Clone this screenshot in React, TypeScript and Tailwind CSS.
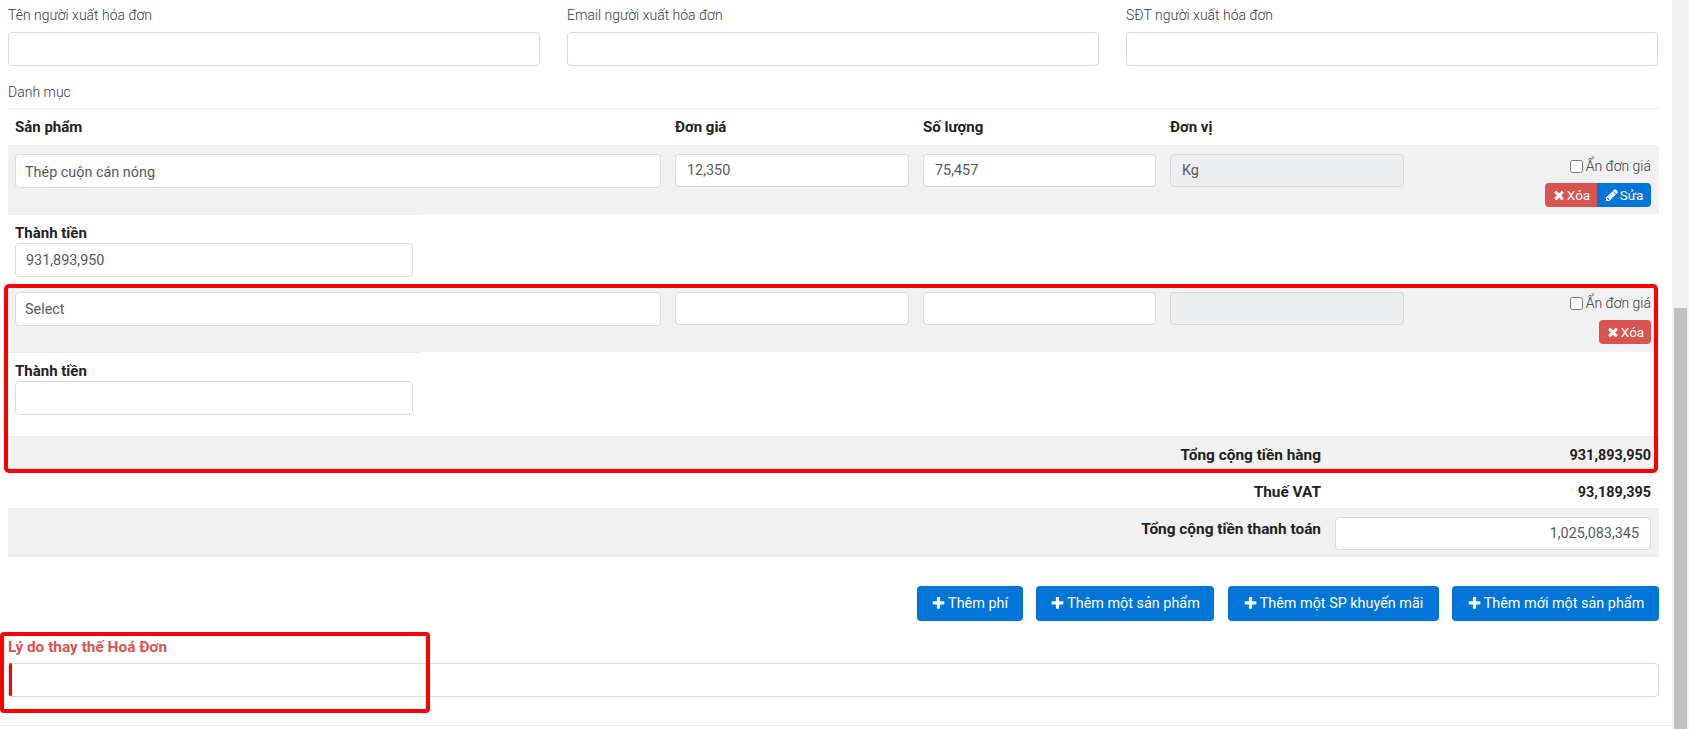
const issuerFields = ['Tên người xuất hóa đơn', 'Email người xuất hóa đơn', 'SĐT người xuất hóa đơn'];
const addButtons = [
  { label: 'Thêm phí', width: 'w-[106px]' },
  { label: 'Thêm một sản phẩm', width: 'w-[178px]' },
  { label: 'Thêm một SP khuyến mãi', width: 'w-[211px]' },
  { label: 'Thêm mới một sản phẩm', width: 'w-[207px]' },
];

const rowGrid = 'grid grid-cols-[646px_234px_233px_234px_1fr] gap-x-[14px] pl-[7px] pr-[8px]';
const inputBase =
  'block w-full rounded-[4px] border border-[#d9d9d9] text-[14.4px] text-[#55595c] outline-none';
const heading = 'text-[15px] font-bold text-[#222222]';
const totalLabel = 'w-[1313px] text-right text-[15.4px] font-bold text-[#222222]';
const totalValue = 'flex-1 pr-[8px] text-right text-[14.4px] font-bold text-[#222222]';

function CloseIcon() {
  return (
    <svg viewBox="0 0 1792 1792" fill="currentColor" className="h-[14px] w-[14px]">
      <path d="M1490 1322q0 40-28 68l-136 136q-28 28-68 28t-68-28l-294-294-294 294q-28 28-68 28t-68-28l-136-136q-28-28-28-68t28-68l294-294-294-294q-28-28-28-68t28-68l136-136q28-28 68-28t68 28l294 294 294-294q28-28 68-28t68 28l136 136q28 28 28 68t-28 68l-294 294 294 294q28 28 28 68z" />
    </svg>
  );
}

function PencilIcon() {
  return (
    <svg viewBox="0 0 1792 1792" fill="currentColor" className="h-[14px] w-[14px]">
      <path d="M491 1536l91-91-235-235-91 91v107h128v128h107zm523-928q0-22-22-22-10 0-17 7l-542 542q-7 7-7 17 0 22 22 22 10 0 17-7l542-542q7-7 7-17zm-54-192l416 416-832 832h-416v-416zm683 96q0 53-37 90l-166 166-416-416 166-165q36-38 90-38 53 0 91 38l235 234q37 39 37 91z" />
    </svg>
  );
}

function PlusIcon() {
  return (
    <svg viewBox="0 0 1792 1792" fill="currentColor" className="h-[15px] w-[15px]">
      <path d="M1600 736v192q0 40-28 68t-68 28h-416v416q0 40-28 68t-68 28h-192q-40 0-68-28t-28-68v-416h-416q-40 0-68-28t-28-68v-192q0-40 28-68t68-28h416v-416q0-40 28-68t68-28h192q40 0 68 28t28 68v416h416q40 0 68 28t28 68z" />
    </svg>
  );
}

function TextInput({ value = '', className = '' }: { value?: string; className?: string }) {
  return <input readOnly value={value} className={`${inputBase} bg-white ${className}`} />;
}

function HidePrice({ className = '' }: { className?: string }) {
  return (
    <label
      className={`flex items-center justify-end gap-[3px] text-[14px] font-light leading-[20px] text-[#373a3c] ${className}`}
    >
      <input type="checkbox" className="h-[13px] w-[13px]" />
      Ẩn đơn giá
    </label>
  );
}

function DeleteButton({ joined }: { joined?: boolean }) {
  return (
    <button
      type="button"
      className={`flex h-[24px] w-[52px] items-center justify-center gap-[1px] bg-[#d9534f] text-[13.5px] text-white ${
        joined ? 'rounded-l-[4px]' : 'rounded-[4px]'
      }`}
    >
      <CloseIcon />
      Xóa
    </button>
  );
}

function ProductRow({
  name,
  price,
  qty,
  unit,
  total,
  editable,
}: {
  name: string;
  price?: string;
  qty?: string;
  unit?: string;
  total?: string;
  editable?: boolean;
}) {
  return (
    <div>
      <div className={`${rowGrid} bg-[#f1f1f1] ${editable ? 'h-[69px] pt-[9px]' : 'h-[68px] pt-[8px]'}`}>
        <TextInput value={name} className={`h-[34px] px-[9px] ${editable ? 'pt-[2px]' : ''}`} />
        <TextInput value={price} className="h-[33px] px-[11px]" />
        <TextInput value={qty} className="h-[33px] px-[11px]" />
        <input readOnly value={unit ?? ''} className={`${inputBase} h-[33px] bg-[#eceeef] px-[11px]`} />
        <div className="flex flex-col items-end">
          <HidePrice className={editable ? 'mt-[2px]' : 'mt-[1px]'} />
          <div className="mt-[7px] flex">
            <DeleteButton joined={editable} />
            {editable && (
              <button
                type="button"
                className="flex h-[24px] w-[54px] items-center justify-center gap-[1px] rounded-r-[4px] bg-[#0275d8] text-[13.5px] text-white"
              >
                <PencilIcon />
                Sửa
              </button>
            )}
          </div>
        </div>
      </div>
      <div className="w-[412px] border-t border-[#eeeeee] pl-[7px] pr-[7px] pt-[8px]">
        <p className={`${heading} leading-[20px]`}>Thành tiền</p>
        <TextInput value={total} className="h-[34px] px-[10px]" />
      </div>
    </div>
  );
}

export default function App() {
  return (
    <div className="flex h-[729px] overflow-hidden bg-white font-['Roboto',sans-serif] text-[#373a3c]">
      <main className="relative flex-1 pl-[8px] pr-[13px]">
        {/* Issuer */}
        <div className="grid grid-cols-[531.5px_531.5px_531.5px] gap-x-[27.5px] pt-[5px]">
          {issuerFields.map((label) => (
            <div key={label}>
              <p className="mb-[7px] text-[14px] font-light leading-[20px] text-[#373a3c]">{label}</p>
              <TextInput className="h-[34px]" />
            </div>
          ))}
        </div>

        <p className="mt-[16px] text-[14px] font-light leading-[20px]">Danh mục</p>
        <div className="mt-[6px] border-t border-[#eeeeee]" />

        {/* Table header */}
        <div className={`${rowGrid} ${heading} h-[36px] items-center`}>
          <span>Sản phẩm</span>
          <span>Đơn giá</span>
          <span>Số lượng</span>
          <span>Đơn vị</span>
        </div>

        <ProductRow name="Thép cuộn cán nóng" price="12,350" qty="75,457" unit="Kg" total="931,893,950" editable />
        <div className="h-[7px]" />
        <ProductRow name="Select" />

        {/* Totals */}
        <div className="mt-[21px] flex h-[37px] items-center border-t border-[#eeeeee] bg-[#f1f1f1] pt-[2px]">
          <span className={totalLabel}>Tổng cộng tiền hàng</span>
          <span className={totalValue}>931,893,950</span>
        </div>
        <div className="flex h-[35px] items-center pt-[4px]">
          <span className={totalLabel}>Thuế VAT</span>
          <span className={totalValue}>93,189,395</span>
        </div>
        <div className="flex h-[49px] border-t border-[#eeeeee] bg-[#f1f1f1] pt-[8px]">
          <span className={`${totalLabel} leading-[24px]`}>Tổng cộng tiền thanh toán</span>
          <TextInput value="1,025,083,345" className="ml-[14px] h-[33px] !w-[316px] px-[11px] text-right" />
        </div>

        {/* Actions */}
        <div className="mt-[29px] flex justify-end gap-[13.5px]">
          {addButtons.map((btn) => (
            <button
              key={btn.label}
              type="button"
              className={`flex h-[35px] items-center justify-center gap-[2px] rounded-[4px] bg-[#0275d8] text-[14.4px] text-white ${btn.width}`}
            >
              <PlusIcon />
              {btn.label}
            </button>
          ))}
        </div>

        <p className="mt-[16px] text-[15.4px] font-bold leading-[20px] text-[#d9534f]">Lý do thay thế Hoá Đơn</p>
        <TextInput className="mt-[6px] h-[34px]" />
        <div className="mt-[28px] -mr-[13px] -ml-[8px] border-t border-[#eeeeee]" />

        {/* Red annotations */}
        <div className="absolute left-[4px] top-[284px] h-[189px] w-[1654px] rounded-[5px] border-4 border-[#ff0000]" />
        <div className="absolute left-0 top-[632px] h-[81px] w-[430px] rounded-[4px] border-4 border-[#ff0000]" />
        <div className="absolute left-[9px] top-[663px] h-[33px] w-[3px] rounded-[2px] bg-[#ff0000]" />
      </main>

      {/* Scrollbar */}
      <div className="flex w-[17px] flex-col bg-[#f1f1f1] px-[2px] pt-[308px]">
        <div className="flex-1 bg-[#c1c1c1]" />
      </div>
    </div>
  );
}
